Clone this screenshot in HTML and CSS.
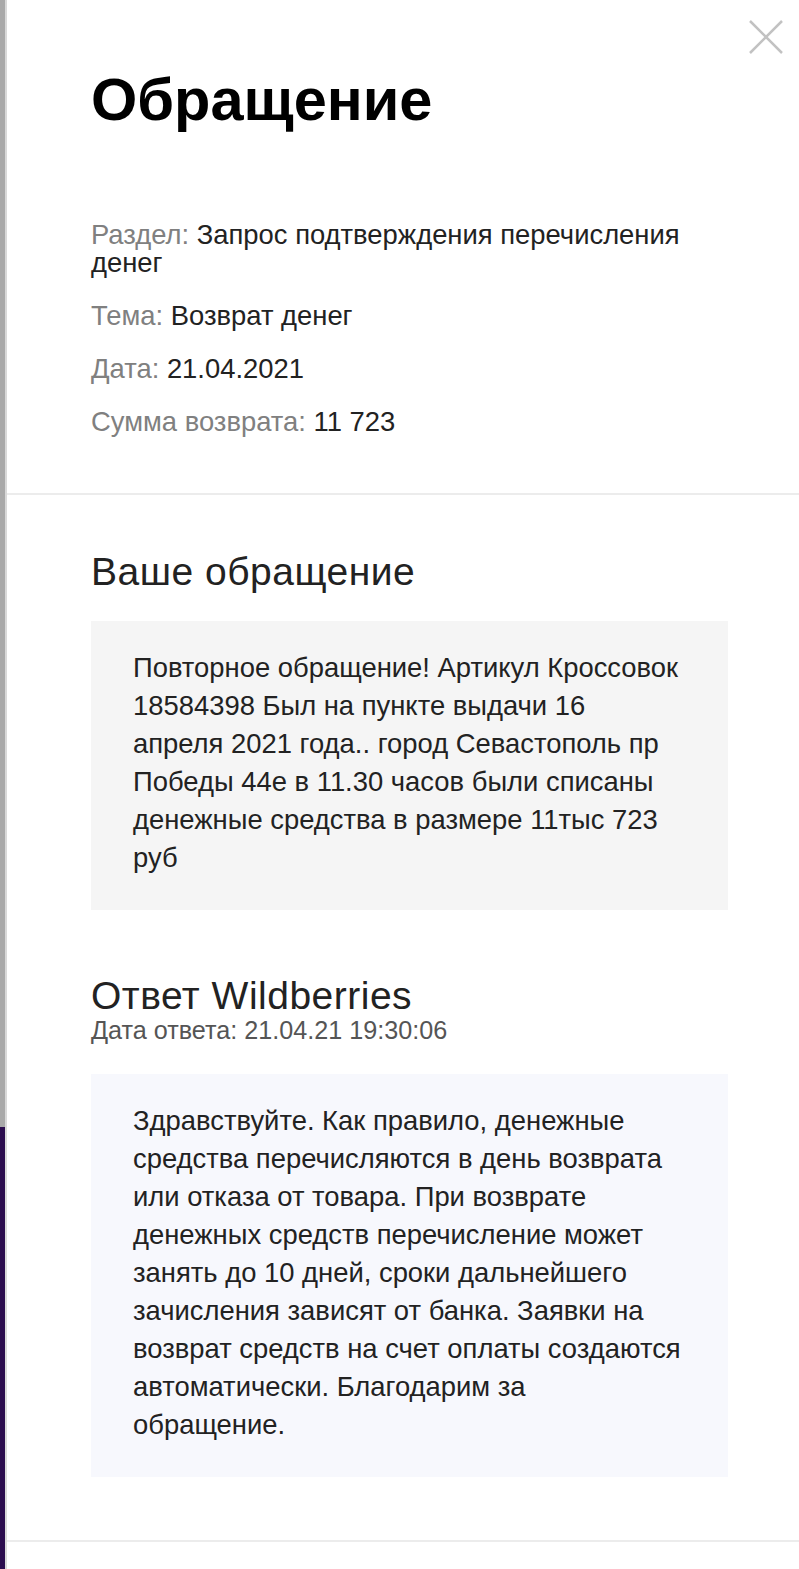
FILE: index.html
```html
<!DOCTYPE html>
<html lang="ru">
<head>
<meta charset="utf-8">
<link rel="stylesheet" href="styles.css">
</head>
<body>
<div class="screen">
  <div class="backdrop">
    <div class="backdrop-top"></div>
    <div class="backdrop-bottom"></div>
  </div>
  <div class="panel">
    <button class="close" aria-label="Закрыть">
      <svg width="34" height="34" viewBox="0 0 34 34"><path d="M1 1 L33 33 M33 1 L1 33" stroke="#c2c2c2" stroke-width="2.5" fill="none"/></svg>
    </button>
    <section class="info">
      <h1 class="title">Обращение</h1>
      <div class="rows">
        <p class="row"><span class="label">Раздел:</span> Запрос подтверждения перечисления денег</p>
        <p class="row"><span class="label">Тема:</span> Возврат денег</p>
        <p class="row"><span class="label">Дата:</span> 21.04.2021</p>
        <p class="row"><span class="label">Сумма возврата:</span> 11 723</p>
      </div>
    </section>
    <section class="main">
      <h2 class="heading">Ваше обращение</h2>
      <div class="box box-gray">
        <p>Повторное обращение! Артикул Кроссовок<br>18584398 Был на пункте выдачи 16<br>апреля 2021 года.. город Севастополь пр<br>Победы 44е в 11.30 часов были списаны<br>денежные средства в размере 11тыс 723<br>руб</p>
      </div>
      <h2 class="heading heading-answer">Ответ Wildberries</h2>
      <div class="answer-date">Дата ответа: 21.04.21 19:30:06</div>
      <div class="box box-blue">
        <p>Здравствуйте. Как правило, денежные<br>средства перечисляются в день возврата<br>или отказа от товара. При возврате<br>денежных средств перечисление может<br>занять до 10 дней, сроки дальнейшего<br>зачисления зависят от банка. Заявки на<br>возврат средств на счет оплаты создаются<br>автоматически. Благодарим за<br>обращение.</p>
      </div>
    </section>
    <div class="footer"></div>
  </div>
</div>
</body>
</html>
```
FILE: styles.css
```css
* { box-sizing: border-box; }
html, body { margin: 0; padding: 0; background: #fff; }
body { font-family: "Liberation Sans", Arial, sans-serif; color: #222; }

.screen { display: flex; min-height: 1569px; width: 799px; overflow: hidden; }

.backdrop { width: 7px; flex: none; display: flex; flex-direction: column; border-right: 2px solid #d9d9d9; }
.backdrop-top { height: 1127px; background: #a9a9a9; }
.backdrop-bottom { flex: 1; background: #2c0d4f; }

.panel { flex: 1; position: relative; background: #fff; }

.close { position: absolute; top: 20px; right: 16px; width: 34px; height: 34px; padding: 0; border: 0; background: none; }
.close svg { display: block; }

.info { padding: 65px 0 57px 84px; border-bottom: 2px solid #ececec; }
.title { margin: 0; font-size: 59.5px; font-weight: 700; color: #000; line-height: 70px; }
.rows { margin-top: 86px; }
.row { margin: 0 0 25px; font-size: 27.4px; line-height: 28px; color: #222; padding-right: 90px; }
.row:last-child { margin-bottom: 0; }
.label { color: #808080; }

.main { padding: 55px 71px 63px 84px; }
.heading { margin: 0; font-size: 39px; font-weight: 400; line-height: 44px; color: #222; letter-spacing: 0.5px; }
.box { margin-top: 27px; padding: 28px 20px 33px 42px; }
.box p { margin: 0; font-size: 27.4px; line-height: 38px; color: #222; white-space: nowrap; }
.box-gray { background: #f5f5f5; }
.box-blue { background: #f7f8fd; }
.heading-answer { margin-top: 64px; }
.answer-date { font-size: 25.2px; line-height: 24px; color: #555; }
.box-blue { margin-top: 32px; }

.footer { border-top: 2px solid #ececec; height: 28px; }
```
